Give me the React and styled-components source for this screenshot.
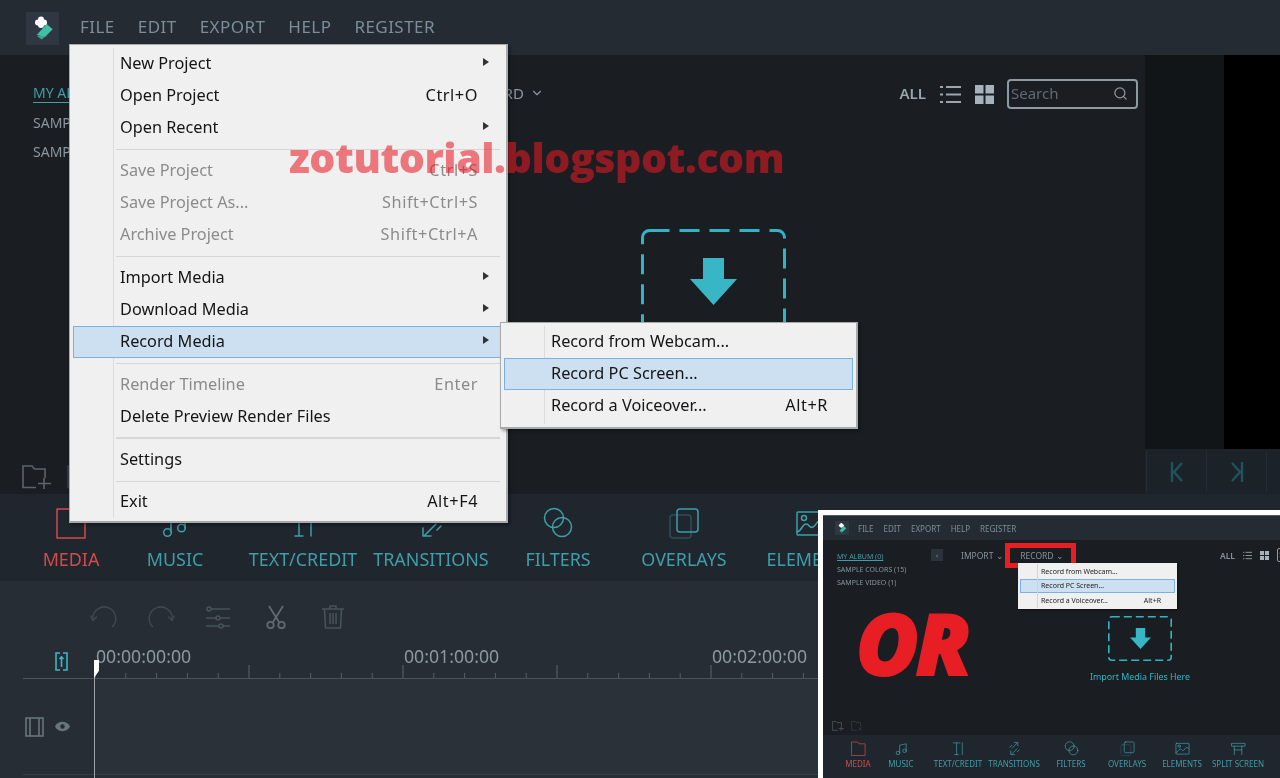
import React from "react";
import styled, { createGlobalStyle } from "styled-components";
import { Search, ChevronDown } from "lucide-react";

const Global = createGlobalStyle`
  html, body { margin: 0; padding: 0; background: #1a1e22; }
  body { font-family: "Noto Sans", "Open Sans", sans-serif; }
  * { box-sizing: border-box; }
`;

const Page = styled.div`
  position: relative; width: 1280px; height: 778px; overflow: hidden;
  display: flex; flex-direction: column; background: #1a1e22; filter: blur(.3px);
`;

/* ---------- top bar ---------- */
const TopBar = styled.header`
  height: 55px; flex: none; background: #242b33; display: flex; align-items: center; padding-left: 26px;
`;
const LogoBox = styled.div`
  width: 33px; height: 33px; margin-top: 2px; background: #2f3842; display: flex; flex: none;
`;
const Nav = styled.nav`
  display: flex; gap: 23px; margin-left: 21px; padding-bottom: 2px; font-size: 17px; color: #7d8d99; letter-spacing: .45px;
`;

/* ---------- library ---------- */
const Content = styled.main`
  height: 439px; flex: none; display: flex;
`;
const Library = styled.section`
  flex: 1; display: flex; flex-direction: column; min-width: 0;
`;
const LibraryBody = styled.div`
  flex: 1; display: flex; min-height: 0;
`;
const Sidebar = styled.aside`
  width: 265px; flex: none; padding: 28px 0 0 33px; display: flex; flex-direction: column; gap: 9.5px;
`;
const Album = styled.div`
  font-size: 14px; line-height: 20px; color: ${p => (p.$active ? "#3f9ea8" : "#8a96a0")};
  white-space: nowrap; width: max-content;
  ${p => p.$active && "border-bottom: 1px solid #3f9ea8; line-height: 19px;"}
`;
const LibraryMain = styled.div`
  flex: 1; display: flex; flex-direction: column; min-width: 0;
`;
const Toolbar = styled.div`
  display: flex; align-items: center; height: 30px; margin-top: 24px; padding: 0 7px 0 200px; color: #8a96a0;
`;
const DropMenu = styled.span`
  display: inline-flex; align-items: center; gap: 6px; font-size: 15px; white-space: nowrap; color: #8a96a0; padding-bottom: 2px;
`;
const ToolbarRight = styled.div`
  margin-left: auto; display: flex; align-items: center;
`;
const AllLabel = styled.span`
  font-size: 15px; font-weight: 600; color: #9aa6af; margin-right: 14px; padding-bottom: 2px;
`;
const ViewIcons = styled.div`
  display: flex; gap: 14px; align-items: center; margin-right: 13px;
`;
const SearchBox = styled.div`
  width: 131px; height: 30px; border: 2px solid #8d99a3; border-radius: 4px; display: flex; align-items: center;
  justify-content: space-between; padding: 0 8px 2px 2px; font-size: 15px; color: #5f6a74;
`;
const DropArea = styled.div`
  margin: 120px 0 0 376px; width: 145px; display: flex; flex-direction: column; align-items: center;
`;
const DashBox = styled.div`
  position: relative; width: 145px; height: 131px; display: flex; justify-content: center; padding-top: 29px;
`;
const DashFrame = styled.svg`
  position: absolute; inset: 0;
`;
const DropText = styled.div`
  margin-top: 25px; color: #33b4c4; font-size: 16px; white-space: nowrap;
`;
const LibFooter = styled.div`
  height: 45px; flex: none; padding: 16px 0 0 22px; display: flex; gap: 16px;
`;

/* ---------- preview ---------- */
const Preview = styled.aside`
  width: 135px; flex: none; display: flex; flex-direction: column;
`;
const PreviewScreen = styled.div`
  flex: 1; display: flex;
`;
const Letterbox = styled.div`
  width: 79px; background: #121518; flex: none;
`;
const BlackVideo = styled.div`
  flex: 1; background: #000;
`;
const Controls = styled.div`
  height: 45px; flex: none; background: #1b2228; display: flex; padding: 2px 0 0 1px;
`;
const ControlCell = styled.div`
  width: 60px; height: 41px; flex: none; border-left: 1px solid #252d34; display: flex; align-items: center; justify-content: center;
`;

/* ---------- tabs ---------- */
const Tabs = styled.nav`
  height: 87px; flex: none; background: #1f262d; display: flex; padding-left: 19px;
`;
const Tab = styled.div`
  width: ${p => p.$w}px; flex: none; display: flex; flex-direction: column; align-items: center; padding-top: 13px;
  color: ${p => (p.$active ? "#d24b4b" : "#3f9ea8")}; font-size: 17.9px; white-space: nowrap;
`;
const TabLabel = styled.span`
  margin-top: 9px; line-height: 22px;
`;

/* ---------- timeline ---------- */
const Timeline = styled.section`
  flex: 1; background: #262d34; display: flex; flex-direction: column; position: relative;
`;
const EditTools = styled.div`
  height: 60px; flex: none; display: flex; align-items: center; padding: 12px 0 0 75px;
`;
const ToolSlot = styled.div`
  width: 57.4px; flex: none; display: flex; justify-content: center;
`;
const RulerRow = styled.div`
  height: 38px; flex: none; margin-left: 23px; display: flex; border-bottom: 1px solid #4a535b;
`;
const RulerLeft = styled.div`
  width: 71px; flex: none; display: flex; justify-content: center; padding: 11px 0 0 6px;
`;
const RulerScale = styled.div`
  flex: 1; position: relative; display: flex; padding: 5px 0 0 2px;
`;
const TimeLabel = styled.span`
  width: 308px; flex: none; font-size: 17.7px; line-height: 20px; color: #8c98a2;
`;
const Ticks = styled.svg`
  position: absolute; left: 0; bottom: 0;
`;
const TrackRow = styled.div`
  height: 96px; flex: none; margin-left: 23px; display: flex; border-bottom: 1px solid #363e46;
`;
const TrackHead = styled.div`
  width: 71px; flex: none; display: flex; align-items: center; gap: 11px; padding: 0 0 0 2px;
`;
const TrackLane = styled.div`
  flex: 1; background: #2a3138;
`;
const Playhead = styled.div`
  position: absolute; left: 94px; top: 79px; bottom: 0; width: 1px; background: #9aa2a8;
  &::before { content: ""; position: absolute; left: 0; top: 0; width: 5px; height: 18px; background: #fff; clip-path: polygon(0 0,100% 0,100% 60%,0 100%); }
`;

/* ---------- context menus ---------- */
const Menu = styled.div`
  position: absolute; left: ${p => p.$x}px; top: ${p => p.$y}px; width: ${p => p.$w}px;
  background: #f0f0f0; border: 2px solid #a9a9a9; border-top-width: 1px; border-left-width: 1px;
  padding: ${p => p.$pad}; color: #111; font-size: 16.3px; box-shadow: 2px 2px 3px rgba(0,0,0,.35);
`;
const Gutter = styled.div`
  position: absolute; left: ${p => p.$x}px; top: 3px; bottom: 3px; width: 1px; background: #dcdcdc;
`;
const Row = styled.div`
  position: relative; height: 32px; display: flex; align-items: center; padding: 0 24px 2px 46px;
  color: ${p => (p.$off ? "#8b8b8b" : "#151515")};
  border: 1px solid ${p => (p.$hot ? "#7cb0e2" : "transparent")}; background: ${p => (p.$hot ? "#cde0f2" : "transparent")};
  white-space: nowrap;
`;
const Shortcut = styled.span`
  margin-left: auto; letter-spacing: .55px;
`;
const Arrow = styled.span`
  position: absolute; right: 13px; top: 9px; width: 0; height: 0;
  border-left: 6px solid #333; border-top: 4.5px solid transparent; border-bottom: 4.5px solid transparent;
`;
const Sep = styled.div`
  height: ${p => (p.$thick ? 2 : 1)}px; background: #d6d6d6; margin: ${p => p.$mt ?? 5}px 3px ${p => p.$mb ?? 5}px 43px;
`;
const Watermark = styled.div`
  position: absolute; left: 289px; top: 129px; font-family: "Open Sans", sans-serif; font-weight: 800; font-size: 41px; line-height: 56px;
  color: rgba(232,25,35,.57); white-space: nowrap; letter-spacing: -.45px;
`;

/* ---------- inset ---------- */
const Inset = styled.aside`
  position: absolute; left: 818px; top: 510px; right: 0; bottom: 0; border-left: 5px solid #fff; border-top: 5px solid #fff;
  background: #1a1e22; display: flex; flex-direction: column; overflow: hidden;
`;
const MiniTop = styled.div`
  height: 25px; flex: none; background: #242b33; display: flex; align-items: center; padding-left: 12px; border-top: 1px solid #555b61;
`;
const MiniLogo = styled.div`
  width: 14px; height: 14px; background: #2f3842; display: flex;
`;
const MiniNav = styled.div`
  display: flex; gap: 10px; margin-left: 9px; font-size: 8px; color: #7d8d99; filter: blur(.4px);
`;
const MiniBody = styled.div`
  flex: 1; display: flex; position: relative; min-height: 0;
`;
const MiniSide = styled.div`
  width: 108px; flex: none; padding: 12px 0 0 14px; display: flex; flex-direction: column; gap: 3px;
  font-size: 7px; line-height: 10px; color: #87939c; white-space: nowrap; filter: blur(.4px);
`;
const MiniActive = styled.span`
  color: #3f9ea8; text-decoration: underline;
`;
const MiniMain = styled.div`
  flex: 1; display: flex; flex-direction: column; min-width: 0;
`;
const MiniBar = styled.div`
  height: 30px; flex: none; display: flex; align-items: center; font-size: 8.5px; color: #87939c; white-space: nowrap;
`;
const MiniCollapse = styled.span`
  width: 12px; height: 12px; flex: none; background: #2a323a; color: #87939c; display: flex; align-items: center; justify-content: center; font-size: 7px;
`;
const MiniImport = styled.span`
  margin-left: 18px; width: 44px; flex: none; filter: blur(.4px);
`;
const RedBox = styled.span`
  width: 71px; height: 25px; flex: none; border: 5px solid #e81e25; display: flex; align-items: center; justify-content: center; padding-left: 3px;
`;
const MiniRecord = styled.span`
  filter: blur(.4px);
`;
const MiniRight = styled.div`
  margin-left: 144px; flex: none; display: flex; align-items: center; gap: 8px; font-weight: 600; filter: blur(.3px);
`;
const MiniSearch = styled.span`
  width: 30px; height: 14px; flex: none; border: 1px solid #8d99a3; border-radius: 2px; font-size: 7px; font-weight: 400; padding-left: 1px; line-height: 11px; color: #5f6a74;
`;
const MiniDrop = styled.div`
  margin: 46px 0 0 177px; width: 64px; display: flex; flex-direction: column; align-items: center;
`;
const MiniDash = styled.div`
  position: relative; width: 64px; height: 45px; display: flex; align-items: center; justify-content: center; flex: none;
`;
const MiniDropText = styled.div`
  margin-top: 9px; font-size: 8.9px; color: #33b4c4; white-space: nowrap; filter: blur(.3px);
`;
const MiniMenu = styled.div`
  position: absolute; left: 195px; top: 23px; width: 159px; height: 46px; background: #f0f0f0; box-shadow: 1px 1px 2px rgba(0,0,0,.5);
  padding: 1px 2px; font-size: 7px; color: #222;
`;
const MiniGutter = styled.span`
  position: absolute; left: 19px; top: 1px; bottom: 1px; width: 1px; background: #d4d4d4;
`;
const MiniRow = styled.div`
  height: 14.5px; display: flex; align-items: center; justify-content: space-between; padding: 0 13px 0 20px; white-space: nowrap;
  border: 1px solid ${p => (p.$hot ? "#7cb0e2" : "transparent")}; background: ${p => (p.$hot ? "#cde0f2" : "transparent")};
`;
const MiniRowText = styled.span`
  filter: blur(.4px);
`;
const BigOr = styled.div`
  position: absolute; left: 33px; top: 60px; font-family: "Open Sans", sans-serif; font-style: italic; font-weight: 800; font-size: 85px; line-height: 85px;
  color: #e81e25; -webkit-text-stroke: 2px #e81e25; letter-spacing: -3px;
`;
const MiniFolder = styled.div`
  position: absolute; left: 9px; bottom: 4px; display: flex; gap: 7px;
`;
const MiniTabs = styled.div`
  height: 43px; flex: none; background: #1f262d; display: flex; padding-left: 14px;
`;
const MiniTab = styled.div`
  width: ${p => p.$w}px; flex: none; display: flex; flex-direction: column; align-items: center; padding-top: 6px;
  color: ${p => (p.$active ? "#d24b4b" : "#3f9ea8")}; font-size: 8px; white-space: nowrap; line-height: 10px; gap: 3px;
`;
const MiniLabel = styled.span`
  filter: blur(.4px);
`;

/* ---------- icons ---------- */
const Logo = ({ s = 33 }) => (
  <svg width={s} height={s} viewBox="0 0 33 33">
    <path d="M20.7 12 26.7 17.3 19 25 10.7 23z" fill="#3fbfa3" />
    <path d="M11 24h9l-4.3 3.6z" fill="#35a891" />
    <circle cx="15" cy="7.5" r="3" fill="#fff" /><circle cx="12" cy="10.5" r="3" fill="#fff" />
    <circle cx="18" cy="10.5" r="3" fill="#fff" /><circle cx="15" cy="13" r="3" fill="#fff" />
  </svg>
);
const Stroke = ({ s, c = "#3f9ea8", w = 1.5, vb = 32, children }) => (
  <svg width={s} height={s} viewBox={`0 0 ${vb} ${vb}`} fill="none" stroke={c} strokeWidth={w} strokeLinecap="round" strokeLinejoin="round">{children}</svg>
);
const TAB_ICONS = {
  media: <path d="M2 2h12l3 4h13v25H2z" />,
  music: <><path d="M12 25V9l14-3v15" /><circle cx="8.5" cy="25.5" r="3.8" /><circle cx="22.5" cy="21" r="3.8" /></>,
  text: <><path d="M5 4h14M12 4v25M8 29h8" /><path d="M24 4v25" /></>,
  transitions: <><path d="M11 15 22 4M16 3h7v7" /><path d="M21 17 9 29M8 21v8h8" /><path d="M6 13 10 9M22 23l4-4" /></>,
  filters: <><circle cx="12" cy="11" r="9.5" /><circle cx="20" cy="20" r="9.5" /></>,
  overlays: <><rect x="9" y="2" width="21" height="23" rx="3" /><rect x="2" y="8" width="21" height="23" rx="3" strokeOpacity=".35" /></>,
  elements: <><rect x="2" y="5" width="28" height="23" rx="1" /><circle cx="9" cy="11" r="2.5" /><path d="M2 25c5-1 5-8 9-8s3 5 7 3 3-6 7-6 5 3 5 3" /></>,
  split: <><path d="M2 5h28v6H2zM7 11v18M7 19h16M23 11v18" /></>,
};
const TabIcon = ({ name, s, c }) => <Stroke s={s} c={c}>{TAB_ICONS[name]}</Stroke>;

const ListIcon = ({ s = 21 }) => (
  <svg width={s} height={s} viewBox="0 0 21 21" fill="#9aa6af">
    <rect x="0" y="2" width="3" height="2" /><rect x="6" y="2" width="15" height="2" />
    <rect x="0" y="9.5" width="3" height="2" /><rect x="6" y="9.5" width="15" height="2" />
    <rect x="0" y="17" width="3" height="2" /><rect x="6" y="17" width="15" height="2" />
  </svg>
);
const GridIcon = ({ s = 19 }) => (
  <svg width={s} height={s} viewBox="0 0 19 19" fill="#a6b3bd">
    <rect width="8.5" height="8.5" /><rect x="10.5" width="8.5" height="8.5" />
    <rect y="10.5" width="8.5" height="8.5" /><rect x="10.5" y="10.5" width="8.5" height="8.5" />
  </svg>
);
const DownArrow = ({ w = 47, h = 47 }) => (
  <svg width={w} height={h} viewBox="0 0 47 47" fill="#38b6c6" style={{ position: "relative" }}>
    <path d="M13 0h21v21h13L23.5 47 0 21h13z" />
  </svg>
);
const Dashes = ({ w, h, sw, dash, gap, r }) => (
  <DashFrame width={w} height={h} fill="none" stroke="#33b4c4" strokeWidth={sw} strokeDasharray={`${dash} ${gap}`}>
    <rect x={sw / 2} y={sw / 2} width={w - sw} height={h - sw} rx={r} />
  </DashFrame>
);
const FolderPlus = ({ s = 29, c = "#59646d" }) => (
  <svg width={s} height={s * 24 / 29} viewBox="0 0 29 24" fill="none" stroke={c} strokeWidth="1.6">
    <path d="M14 22.5H1V1h9l2.5 3H23v9" /><path d="M22 13v11M16 18.5h13" />
  </svg>
);
const FolderRemove = ({ s = 29, c = "#39424a" }) => (
  <svg width={s} height={s * 24 / 29} viewBox="0 0 29 24" fill="none" stroke={c} strokeWidth="1.6">
    <path d="M14 22.5H1V1h9l2.5 3H23v9" /><path d="m18 15 8 8M26 15l-8 8" />
  </svg>
);
const Skip = ({ flip }) => (
  <svg width="14" height="20" viewBox="0 0 14 20" fill="none" stroke="#1f535f" strokeWidth="2.4" style={flip ? { transform: "scaleX(-1)" } : undefined}>
    <path d="M2 0v20M12 1 4 10l8 9" />
  </svg>
);
const ArcTool = ({ flip }) => (
  <svg width="27" height="24" viewBox="0 0 27 24" fill="none" stroke="#3d4850" strokeWidth="1.5" style={flip ? { transform: "scaleX(-1)" } : undefined}>
    <path d="M22 22A11.5 11.5 0 1 0 2.8 14" /><path d="M.5 10.5 3 15.5l3.8-4" />
  </svg>
);
const Sliders = () => (
  <svg width="24" height="23" viewBox="0 0 24 23" fill="none" stroke="#47525b" strokeWidth="1.6">
    <path d="M5 3h19M0 12h10M14 12h10M0 20h13M17 20h7" /><circle cx="3" cy="3" r="2" /><circle cx="12" cy="12" r="2" /><circle cx="15" cy="20" r="2" />
  </svg>
);
const Scissors = () => (
  <svg width="20" height="24" viewBox="0 0 20 24" fill="none" stroke="#5f6a73" strokeWidth="1.8">
    <path d="M3 1l10 16M17 1 7 17" /><circle cx="4.5" cy="20" r="3.2" /><circle cx="15.5" cy="20" r="3.2" />
  </svg>
);
const Trash = () => (
  <svg width="22" height="24" viewBox="0 0 22 24" fill="none" stroke="#47525b" strokeWidth="1.6">
    <path d="M0 4h22M8 4V1h6v3M2.5 4l1 19h15l1-19M8 8v11M11 8v11M14 8v11" />
  </svg>
);
const Snap = () => (
  <svg width="13" height="19" viewBox="0 0 13 19" fill="none" stroke="#38b6c6" strokeWidth="1.6">
    <path d="M5 1H1v17h4M8 1h4v17H8M6.5 4v11M4.5 7l2-2 2 2" />
  </svg>
);
const Film = () => (
  <svg width="19" height="20" viewBox="0 0 19 20" fill="none" stroke="#69747d" strokeWidth="1.6">
    <rect x="1" y="1" width="17" height="18" /><path d="M5 1v18M14 1v18" />
  </svg>
);
const Eye = () => (
  <svg width="15" height="11" viewBox="0 0 17 12" fill="#69747d">
    <path d="M0 6c3-7 14-7 17 0-3 7-14 7-17 0z" /><circle cx="8.5" cy="6" r="2.5" fill="#262d34" />
  </svg>
);
const TickMarks = () => {
  const marks = [];
  for (let i = 0; i < 26; i++) {
    const x = 1 + i * 30.8;
    const major = i % 5 === 0 && i > 0;
    marks.push(<line key={i} x1={x} x2={x} y1={major ? 0 : 8} y2={13} stroke={major ? "#5b646c" : "#57606a"} />);
  }
  return <Ticks width="724" height="13">{marks}</Ticks>;
};

/* ---------- data ---------- */
const TABS = [
  ["media", "MEDIA", 104], ["music", "MUSIC", 104], ["text", "TEXT/CREDIT", 152], ["transitions", "TRANSITIONS", 104],
  ["filters", "FILTERS", 150], ["overlays", "OVERLAYS", 102], ["elements", "ELEMENTS", 152],
];
const MINI_TABS = [
  ["media", "MEDIA", 42], ["music", "MUSIC", 44], ["text", "TEXT/CREDIT", 70], ["transitions", "TRANSITIONS", 42],
  ["filters", "FILTERS", 72], ["overlays", "OVERLAYS", 40], ["elements", "ELEMENTS", 70], ["split", "SPLIT SCREEN", 42],
];
const NAV = ["FILE", "EDIT", "EXPORT", "HELP", "REGISTER"];
const MENU = [
  { t: "New Project", sub: 1 }, { t: "Open Project", k: "Ctrl+O" }, { t: "Open Recent", sub: 1 }, { sep: 1 },
  { t: "Save Project", k: "Ctrl+S", off: 1 }, { t: "Save Project As...", k: "Shift+Ctrl+S", off: 1 }, { t: "Archive Project", k: "Shift+Ctrl+A", off: 1 }, { sep: 1 },
  { t: "Import Media", sub: 1 }, { t: "Download Media", sub: 1 }, { t: "Record Media", sub: 1, hot: 1 }, { sep: 1 },
  { t: "Render Timeline", k: "Enter", off: 1 }, { t: "Delete Preview Render Files" }, { sep: 1, thick: 1, mt: 4 },
  { t: "Settings" }, { sep: 1, mb: 4 }, { t: "Exit", k: "Alt+F4" },
];
const SUBMENU = [
  { t: "Record from Webcam..." }, { t: "Record PC Screen...", hot: 1 }, { t: "Record a Voiceover...", k: "Alt+R" },
];

export default function App() {
  return (
    <Page>
      <Global />
      <TopBar>
        <LogoBox><Logo /></LogoBox>
        <Nav>{NAV.map(n => <span key={n}>{n}</span>)}</Nav>
      </TopBar>

      <Content>
        <Library>
          <LibraryBody>
            <Sidebar>
              <Album $active>MY ALBUM (0)</Album>
              <Album>SAMPLE COLORS (15)</Album>
              <Album>SAMPLE VIDEO (1)</Album>
            </Sidebar>
            <LibraryMain>
              <Toolbar>
                <DropMenu>RECORD <ChevronDown size={14} /></DropMenu>
                <ToolbarRight>
                  <AllLabel>ALL</AllLabel>
                  <ViewIcons><ListIcon /><GridIcon /></ViewIcons>
                  <SearchBox>Search<Search size={15} color="#8d99a3" /></SearchBox>
                </ToolbarRight>
              </Toolbar>
              <DropArea>
                <DashBox>
                  <Dashes w={145} h={131} sw={3} dash={20} gap={10} r={7} />
                  <DownArrow />
                </DashBox>
                <DropText>Import Media Files Here</DropText>
              </DropArea>
            </LibraryMain>
          </LibraryBody>
          <LibFooter><FolderPlus /><FolderRemove /></LibFooter>
        </Library>
        <Preview>
          <PreviewScreen><Letterbox /><BlackVideo /></PreviewScreen>
          <Controls>
            <ControlCell><Skip /></ControlCell>
            <ControlCell><Skip flip /></ControlCell>
            <ControlCell />
          </Controls>
        </Preview>
      </Content>

      <Tabs>
        {TABS.map(([icon, label, w], i) => (
          <Tab key={label} $w={w} $active={i === 0}>
            <TabIcon name={icon} s={32} c={i === 0 ? "#d24b4b" : "#3f9ea8"} />
            <TabLabel>{label}</TabLabel>
          </Tab>
        ))}
      </Tabs>

      <Timeline>
        <EditTools>
          <ToolSlot><ArcTool /></ToolSlot>
          <ToolSlot><ArcTool flip /></ToolSlot>
          <ToolSlot><Sliders /></ToolSlot>
          <ToolSlot><Scissors /></ToolSlot>
          <ToolSlot><Trash /></ToolSlot>
        </EditTools>
        <RulerRow>
          <RulerLeft><Snap /></RulerLeft>
          <RulerScale>
            <TimeLabel>00:00:00:00</TimeLabel>
            <TimeLabel>00:01:00:00</TimeLabel>
            <TimeLabel>00:02:00:00</TimeLabel>
            <TickMarks />
          </RulerScale>
        </RulerRow>
        <TrackRow>
          <TrackHead><Film /><Eye /></TrackHead>
          <TrackLane />
        </TrackRow>
        <Playhead />
      </Timeline>

      <Inset>
        <MiniTop>
          <MiniLogo><Logo s={14} /></MiniLogo>
          <MiniNav>{NAV.map(n => <span key={n}>{n}</span>)}</MiniNav>
        </MiniTop>
        <MiniBody>
          <MiniSide>
            <MiniActive>MY ALBUM (0)</MiniActive>
            <span>SAMPLE COLORS (15)</span>
            <span>SAMPLE VIDEO (1)</span>
          </MiniSide>
          <MiniMain>
            <MiniBar>
              <MiniCollapse>‹</MiniCollapse>
              <MiniImport>IMPORT ⌄</MiniImport>
              <RedBox><MiniRecord>RECORD ⌄</MiniRecord></RedBox>
              <MiniRight>ALL <ListIcon s={9} /><GridIcon s={9} /><MiniSearch>Search</MiniSearch></MiniRight>
            </MiniBar>
            <MiniDrop>
              <MiniDash>
                <Dashes w={64} h={45} sw={1.6} dash={8} gap={4} r={3} />
                <DownArrow w={21} h={21} />
              </MiniDash>
              <MiniDropText>Import Media Files Here</MiniDropText>
            </MiniDrop>
          </MiniMain>
          <MiniMenu>
            <MiniGutter />
            {SUBMENU.map(m => (
              <MiniRow key={m.t} $hot={m.hot}>
                <MiniRowText>{m.t}</MiniRowText>
                {m.k && <MiniRowText>{m.k}</MiniRowText>}
              </MiniRow>
            ))}
          </MiniMenu>
          <BigOr>OR</BigOr>
          <MiniFolder><FolderPlus s={12} /><FolderRemove s={12} /></MiniFolder>
        </MiniBody>
        <MiniTabs>
          {MINI_TABS.map(([icon, label, w], i) => (
            <MiniTab key={label} $w={w} $active={i === 0}>
              <TabIcon name={icon} s={15} c={i === 0 ? "#d24b4b" : "#3f9ea8"} />
              <MiniLabel>{label}</MiniLabel>
            </MiniTab>
          ))}
        </MiniTabs>
      </Inset>

      <Menu $x={69} $y={44} $w={439} $pad="3px 3px 3px 3px">
        <Gutter $x={43} />
        {MENU.map((m, i) => m.sep ? <Sep key={i} $thick={m.thick} $mt={m.mt} $mb={m.mb} /> : (
          <Row key={m.t} $off={m.off} $hot={m.hot}>
            {m.t}
            {m.k && <Shortcut>{m.k}</Shortcut>}
            {m.sub && <Arrow />}
          </Row>
        ))}
      </Menu>

      <Menu $x={500} $y={322} $w={358} $pad="3px 3px 5px 3px">
        <Gutter $x={43} />
        {SUBMENU.map(m => (
          <Row key={m.t} $hot={m.hot}>
            {m.t}
            {m.k && <Shortcut>{m.k}</Shortcut>}
          </Row>
        ))}
      </Menu>

      <Watermark>zotutorial.blogspot.com</Watermark>
    </Page>
  );
}
